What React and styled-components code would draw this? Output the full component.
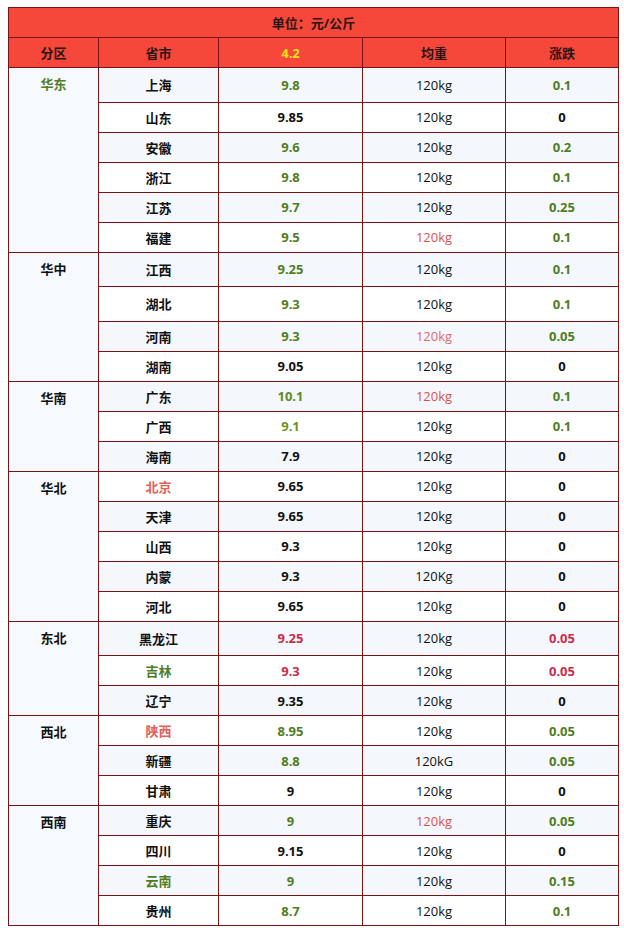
import React from 'react';
import styled, { createGlobalStyle } from 'styled-components';

const GlobalStyle = createGlobalStyle`
  body {
    margin: 7px 0 0 8px;
    background: #ffffff;
    font-family: "Open Sans", "Noto Sans CJK SC", sans-serif;
  }
`;

const GREEN = '#4f7d1f';
const RED = '#d9534f';
const CRIMSON = '#cc2a4c';

const Table = styled.table`
  border-collapse: collapse;
  table-layout: fixed;
  width: 610px;
  font-size: 13px;
  color: #111;
`;

const Title = styled.th`
  height: 29px;
  padding: 0;
  background: #f5483b;
  border: 1px solid #7a1414;
  font-weight: 700;
  color: #2a1414;
`;

const HeadCell = styled.th`
  height: 29px;
  padding: 0;
  background: #f5483b;
  border: 1px solid #7a1414;
  font-weight: 700;
  color: ${(p) => (p.$yellow ? '#ffe01a' : '#2a1414')};
`;

const Row = styled.tr`
  height: ${(p) => (p.$tall ? '34.5px' : '30px')};
  background: ${(p) => (p.$shade ? '#f4f8fc' : '#ffffff')};
`;

const Cell = styled.td`
  padding: 0;
  border: 1px solid #7a1414;
  text-align: center;
  vertical-align: middle;
  font-weight: ${(p) => (p.$light ? 400 : 700)};
  color: ${(p) => p.$color || '#111'};
`;

const RegionCell = styled.td`
  padding: 7px 0 0;
  border: 1px solid #7a1414;
  background: #f6f9fd;
  text-align: center;
  vertical-align: top;
  line-height: 18px;
  font-weight: 700;
  color: ${(p) => p.$color || '#111'};
`;

const g = GREEN;
const r = RED;
const c = CRIMSON;

const regions = [
  {
    name: '华东',
    color: g,
    rows: [
      ['上海', null, '9.8', g, '120kg', null, '0.1', g, true],
      ['山东', null, '9.85', null, '120kg', null, '0', null],
      ['安徽', null, '9.6', g, '120kg', null, '0.2', g],
      ['浙江', null, '9.8', g, '120kg', null, '0.1', g],
      ['江苏', null, '9.7', g, '120kg', null, '0.25', g],
      ['福建', null, '9.5', g, '120kg', r, '0.1', g],
    ],
  },
  {
    name: '华中',
    rows: [
      ['江西', null, '9.25', g, '120kg', null, '0.1', g, true],
      ['湖北', null, '9.3', g, '120kg', null, '0.1', g, true],
      ['河南', null, '9.3', g, '120kg', '#e06a6a', '0.05', g],
      ['湖南', null, '9.05', null, '120kg', null, '0', null],
    ],
  },
  {
    name: '华南',
    rows: [
      ['广东', null, '10.1', '#5f8a22', '120kg', r, '0.1', g],
      ['广西', null, '9.1', '#6b9424', '120kg', null, '0.1', g],
      ['海南', null, '7.9', null, '120kg', null, '0', null],
    ],
  },
  {
    name: '华北',
    rows: [
      ['北京', '#e0605a', '9.65', null, '120kg', null, '0', null],
      ['天津', null, '9.65', null, '120kg', null, '0', null],
      ['山西', null, '9.3', null, '120kg', null, '0', null],
      ['内蒙', null, '9.3', null, '120Kg', null, '0', null],
      ['河北', null, '9.65', null, '120kg', null, '0', null],
    ],
  },
  {
    name: '东北',
    rows: [
      ['黑龙江', null, '9.25', c, '120kg', null, '0.05', c, true],
      ['吉林', g, '9.3', c, '120kg', null, '0.05', c],
      ['辽宁', null, '9.35', null, '120kg', null, '0', null],
    ],
  },
  {
    name: '西北',
    rows: [
      ['陕西', '#e0605a', '8.95', g, '120kg', null, '0.05', g],
      ['新疆', null, '8.8', g, '120kG', null, '0.05', g],
      ['甘肃', null, '9', null, '120kg', null, '0', null],
    ],
  },
  {
    name: '西南',
    rows: [
      ['重庆', null, '9', g, '120kg', r, '0.05', g],
      ['四川', null, '9.15', null, '120kg', null, '0', null],
      ['云南', g, '9', g, '120kg', null, '0.15', g],
      ['贵州', null, '8.7', g, '120kg', null, '0.1', g],
    ],
  },
];

const App = () => {
  let index = 0;

  return (
    <>
      <GlobalStyle />
      <Table>
        <colgroup>
          <col style={{ width: 90 }} />
          <col style={{ width: 120 }} />
          <col style={{ width: 144 }} />
          <col style={{ width: 143 }} />
          <col style={{ width: 113 }} />
        </colgroup>
        <thead>
          <tr>
            <Title colSpan={5}>单位：元/公斤</Title>
          </tr>
          <tr>
            <HeadCell>分区</HeadCell>
            <HeadCell>省市</HeadCell>
            <HeadCell $yellow>4.2</HeadCell>
            <HeadCell>均重</HeadCell>
            <HeadCell>涨跌</HeadCell>
          </tr>
        </thead>
        <tbody>
          {regions.map((region) =>
            region.rows.map((row, i) => {
              const [city, cityColor, price, priceColor, weight, weightColor, change, changeColor, tall] = row;
              const shade = index % 2 === 0;
              index += 1;
              return (
                <Row key={city} $tall={tall} $shade={shade}>
                  {i === 0 && (
                    <RegionCell rowSpan={region.rows.length} $color={region.color}>
                      {region.name}
                    </RegionCell>
                  )}
                  <Cell $color={cityColor}>{city}</Cell>
                  <Cell $color={priceColor}>{price}</Cell>
                  <Cell $light $color={weightColor}>{weight}</Cell>
                  <Cell $color={changeColor}>{change}</Cell>
                </Row>
              );
            })
          )}
        </tbody>
      </Table>
    </>
  );
};

export default App;
